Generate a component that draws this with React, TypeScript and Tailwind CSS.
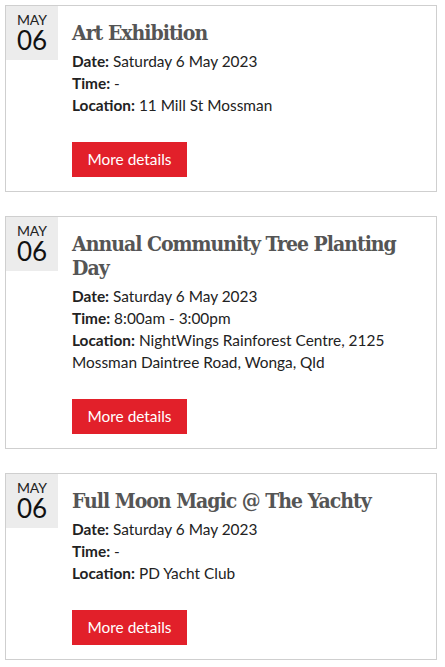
import React from "react";

type Ev = { title: string; time: string; location: string };

const events: Ev[] = [
  { title: "Art Exhibition", time: "-", location: "11 Mill St Mossman" },
  {
    title: "Annual Community Tree Planting Day",
    time: "8:00am - 3:00pm",
    location: "NightWings Rainforest Centre, 2125 Mossman Daintree Road, Wonga, Qld",
  },
  { title: "Full Moon Magic @ The Yachty", time: "-", location: "PD Yacht Club" },
];

function Card({ ev }: { ev: Ev }) {
  return (
    <div className="flex border border-[#cfcfcf] bg-white pb-[14px]">
      <div className="w-[52px] h-[54px] shrink-0 bg-[#ececec] flex flex-col items-center pt-[6px]">
        <div className="text-[14px] leading-[15px] text-[#222]">MAY</div>
        <div className="text-[26px] leading-[27px] text-[#111]">06</div>
      </div>
      <div className="ml-[14px] pt-[15px] pr-2 flex-1">
        <h2
          className="text-[21px] leading-[24px] font-bold text-[#555] font-stretch-condensed tracking-[-1px]"
          style={{ fontFamily: '"DejaVu Serif Condensed", "DejaVu Serif", serif' }}
        >
          {ev.title}
        </h2>
        <div className="mt-[5px] text-[15.4px] leading-[22px] text-[#222]">
          <div>
            <span className="font-bold">Date:</span> Saturday 6 May 2023
          </div>
          <div>
            <span className="font-bold">Time:</span> {ev.time}
          </div>
          <div>
            <span className="font-bold">Location:</span> {ev.location}
          </div>
        </div>
        <button className="mt-[26px] h-[35px] w-[115px] bg-[#e2202a] text-white text-[15.4px] flex items-center justify-center">
          More details
        </button>
      </div>
    </div>
  );
}

export default function App() {
  return (
    <div
      className="bg-white min-h-[667px] pl-[5px] pr-[8px] pt-[5px] flex flex-col gap-[24px]"
      style={{ fontFamily: 'Lato, "Open Sans", sans-serif' }}
    >
      {events.map((ev, i) => (
        <Card key={i} ev={ev} />
      ))}
    </div>
  );
}
